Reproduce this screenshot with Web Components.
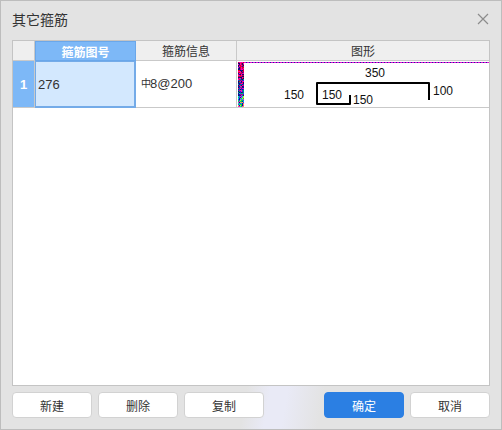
<!DOCTYPE html>
<html>
<head>
<meta charset="utf-8">
<style>
html, body { margin: 0; padding: 0; width: 502px; height: 430px; overflow: hidden; }
</style>
</head>
<body>
<stirrup-dialog>
    <span slot="title">其它箍筋</span>
    <stirrup-table></stirrup-table>
    <dialog-button slot="left">新建</dialog-button>
    <dialog-button slot="left">删除</dialog-button>
    <dialog-button slot="left">复制</dialog-button>
    <dialog-button slot="right" primary>确定</dialog-button>
    <dialog-button slot="right">取消</dialog-button>
</stirrup-dialog>

<script>
const FONT = '"Liberation Sans", "Noto Sans CJK SC", sans-serif';

class StirrupDialog extends HTMLElement {
    constructor() {
        super();
        this.attachShadow({ mode: 'open' });
    }

    connectedCallback() {
        this.shadowRoot.innerHTML = `
        <style>
        :host {
            display: flex;
            flex-direction: column;
            box-sizing: border-box;
            width: 502px;
            height: 430px;
            border: 1px solid #bdbdbd;
            background: #e3e3e3;
            font-family: ${FONT};
            color: #333;
            position: relative;
        }
        .glow {
            position: absolute;
            left: 225px;
            bottom: 0;
            width: 100px;
            height: 43px;
            background: linear-gradient(100deg, rgba(234,235,247,0) 20%, #e9eaf6 42%, #e9eaf6 58%, rgba(234,235,247,0) 92%);
        }
        header {
            display: flex;
            align-items: center;
            justify-content: space-between;
            box-sizing: border-box;
            height: 39px;
            padding: 0 12px 3px 11px;
            font-size: 14px;
            flex: none;
        }
        main {
            flex: 1;
            min-height: 0;
            margin: 0 11px;
            position: relative;
        }
        footer {
            display: flex;
            justify-content: space-between;
            padding: 6px 11px 11px 11px;
            position: relative;
        }
        .group { display: flex; gap: 6px; }
        svg { display: block; }
        </style>
        <div class="glow"></div>
        <header>
            <slot name="title"></slot>
            <svg width="12" height="12" viewBox="0 0 12 12" aria-hidden="true">
                <path d="M1 1 L11 11 M11 1 L1 11" stroke="#8c8c8c" stroke-width="1.2" fill="none"/>
            </svg>
        </header>
        <main><slot></slot></main>
        <footer>
            <div class="group"><slot name="left"></slot></div>
            <div class="group"><slot name="right"></slot></div>
        </footer>
        `;
    }
}

class DialogButton extends HTMLElement {
    constructor() {
        super();
        this.attachShadow({ mode: 'open' });
    }

    connectedCallback() {
        this.shadowRoot.innerHTML = `
        <style>
        :host {
            display: flex;
            align-items: center;
            justify-content: center;
            box-sizing: border-box;
            width: 80px;
            height: 26px;
            background: #fff;
            border: 1px solid #d2d2d2;
            border-radius: 4px;
            font-size: 12px;
            color: #333;
        }
        :host([primary]) {
            background: #2b7fe3;
            border-color: #2b7fe3;
            color: #fff;
        }
        </style>
        <slot></slot>
        `;
    }
}

class StirrupTable extends HTMLElement {
    constructor() {
        super();
        this.attachShadow({ mode: 'open' });
    }

    connectedCallback() {
        this.shadowRoot.innerHTML = `
        <style>
        :host {
            display: block;
            box-sizing: border-box;
            height: 346px;
            width: 478px;
            background: #fff;
            border: 1px solid #c4c4c4;
            font-size: 12px;
        }
        .grid {
            display: grid;
            grid-template-columns: 22px 101px 101px 252px;
            grid-template-rows: 20px 47px;
        }
        .cell {
            box-sizing: border-box;
            display: flex;
            align-items: center;
            border-right: 1px solid #c9c9c9;
            border-bottom: 1px solid #c9c9c9;
        }
        .cell:nth-child(4n) { border-right: none; }
        .head {
            justify-content: center;
            background: #efefef;
            color: #333;
        }
        .head.active {
            background: #7db8f7;
            border: 1px solid #6aa7ea;
            color: #fff;
            font-weight: bold;
        }
        .num {
            justify-content: center;
            background: #7db8f7;
            color: #fff;
            font-weight: bold;
            font-size: 13px;
        }
        .current {
            background: #d3e8fe;
            border: 2px solid #74abe8;
            border-width: 1px 2px 2px 1px;
            padding-left: 2px;
            font-size: 13px;
        }
        .info { padding: 0 0 2px 5px; font-size: 13px; color: #333; }
        .info small { font-size: 10px; margin-right: -1px; position: relative; top: -1px; }
        .shape { padding: 0; align-items: stretch; }
        .shape svg { display: block; }
        text { font-family: ${FONT}; font-size: 12px; fill: #111; }
        </style>
        <div class="grid">
            <div class="cell head"></div>
            <div class="cell head active">箍筋图号</div>
            <div class="cell head">箍筋信息</div>
            <div class="cell head">图形</div>
            <div class="cell num">1</div>
            <div class="cell current">276</div>
            <div class="cell info"><small>中</small>8@200</div>
            <div class="cell shape">
                <svg width="252" height="46" viewBox="237 61 252 46">
                    <g id="noise" shape-rendering="crispEdges"></g>
                    <path d="M429 100 V83 H317 V104 H350 V95" fill="none" stroke="#000" stroke-width="2" stroke-linejoin="round"/>
                    <text x="365" y="77">350</text>
                    <text x="284" y="99">150</text>
                    <text x="322" y="99">150</text>
                    <text x="353" y="104">150</text>
                    <text x="433" y="95">100</text>
                </svg>
            </div>
        </div>
        `;
        this.drawNoise();
    }

    // the corrupted strip at the left and top of the drawing
    drawNoise() {
        const group = this.shadowRoot.querySelector('#noise');
        const NS = 'http://www.w3.org/2000/svg';
        const top = ['#ff00c0', '#e00020', '#ff00a0', '#1010a0', '#c00060', '#101060'];
        const mid = ['#1010a0', '#ff00c0', '#101060', '#008890', '#2030d0', '#e00060'];
        const low = ['#101090', '#00d060', '#ff20c0', '#00d0d0', '#2050f0', '#e0e020'];
        const dot = (x, y, fill) => {
            const r = document.createElementNS(NS, 'rect');
            r.setAttribute('x', x);
            r.setAttribute('y', y);
            r.setAttribute('width', 1);
            r.setAttribute('height', 1);
            r.setAttribute('fill', fill);
            group.appendChild(r);
        };
        let seed = 4217;
        const next = (n) => {
            seed = (seed * 16807) % 2147483647;
            return (seed >> 7) % n;
        };
        for (let y = 62; y < 107; y++) {
            // fade from one palette into the next as the strip goes down
            const pos = (y - 62) / 45 * 2 + next(40) / 100 - 0.2;
            const colors = pos < 0.8 ? top : (pos < 1.4 ? mid : low);
            for (let x = 238; x < 244; x++) {
                dot(x, y, colors[next(6)]);
            }
        }
        for (let x = 244; x < 489; x++) {
            dot(x, 62, x % 3 ? '#e010d0' : '#2020a0');
        }
    }
}

customElements.define('stirrup-dialog', StirrupDialog);
customElements.define('dialog-button', DialogButton);
customElements.define('stirrup-table', StirrupTable);
</script>
</body>
</html>
